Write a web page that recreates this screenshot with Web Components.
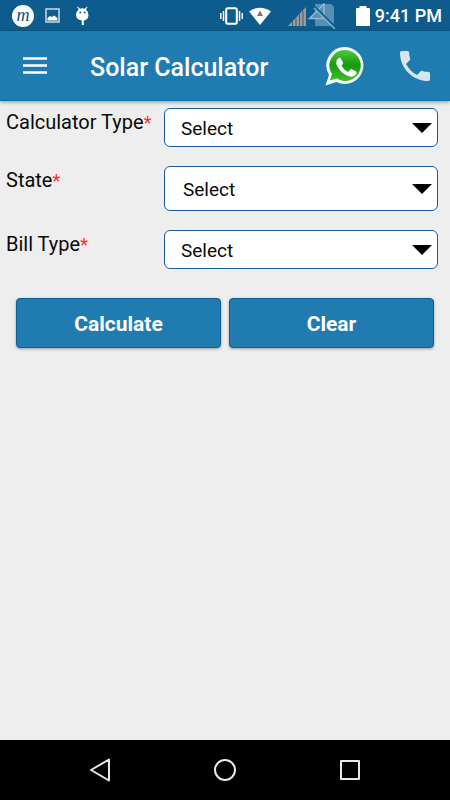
<!DOCTYPE html>
<html lang="en">
<head>
<meta charset="utf-8">
<meta name="viewport" content="width=device-width, initial-scale=1">
<title>Solar Calculator</title>
<style>
  body {
    margin: 0;
    font-family: Roboto, "Noto Sans", sans-serif;
    background: #eeeeee;
  }
</style>
</head>
<body>
<solar-app>
  <status-bar slot="top" time="9:41 PM"></status-bar>
  <app-header slot="top">Solar Calculator</app-header>
  <select-field placeholder="Select">Calculator Type</select-field>
  <select-field placeholder="Select" size="tall">State</select-field>
  <select-field placeholder="Select">Bill Type</select-field>
  <action-button slot="actions">Calculate</action-button>
  <action-button slot="actions">Clear</action-button>
  <nav-bar slot="bottom"></nav-bar>
</solar-app>

<script>
class SolarApp extends HTMLElement {
  constructor() {
    super();
    this.attachShadow({ mode: "open" });
  }

  connectedCallback() {
    this.shadowRoot.innerHTML = /* html */ `
      <style>
        :host {
          display: flex;
          flex-direction: column;
          min-height: 100vh;
        }

        main {
          flex: 1;
        }

        .fields {
          display: grid;
          gap: 19px;
          padding: 7px 12px 0 6px;
        }

        .actions {
          display: grid;
          grid-template-columns: 1fr 1fr;
          gap: 8px;
          padding: 29px 16px 16px;
        }
      </style>

      <slot name="top"></slot>
      <main>
        <div class="fields"><slot></slot></div>
        <div class="actions"><slot name="actions"></slot></div>
      </main>
      <slot name="bottom"></slot>
    `;
  }
}

class StatusBar extends HTMLElement {
  constructor() {
    super();
    this.attachShadow({ mode: "open" });
  }

  connectedCallback() {
    this.shadowRoot.innerHTML = /* html */ `
      <style>
        :host {
          display: flex;
          align-items: center;
          justify-content: space-between;
          height: 31px;
          padding: 0 8px 0 12px;
          color: #fff;
          background: #0d5c8d;
        }

        .group {
          display: flex;
          align-items: center;
        }

        .logo {
          width: 22px;
          height: 22px;
          border-radius: 50%;
          background: #fff;
          color: #0d4f7c;
          font: italic 18px/20px "Liberation Serif", serif;
          text-align: center;
        }

        .left {
          gap: 11px;
        }

        .signal {
          margin-left: 13px;
        }

        .battery {
          margin: 0 5px 0 18px;
        }

        time {
          font-size: 18px;
          font-weight: 500;
          line-height: 32px;
        }

        svg {
          display: block;
        }
      </style>

      <div class="group left">
        <span class="logo">m</span>
        <svg width="15" height="15" viewBox="0 0 15 15">
          <rect x="1" y="1" width="13" height="13" fill="none" stroke="#bed4e3" stroke-width="1.6"/>
          <path d="M2.500 12.500V10l2.500-2 2 1 2-1.500 3.500 2.500v2.500z" fill="#fff"/>
        </svg>
        <svg width="24" height="22" viewBox="0 0 24 22">
          <path d="M6.500 1.500l2.600 2.300Q11.300 2.600 13.600 3.800L16.200 1.500l.4.500-1.600 2.500Q17.800 7 17.500 10.500 16.800 15 12.800 15.500V20h-2v-4.500Q6 15 5 10.500 4.800 7 7.800 4.600L6 2z" fill="#fff"/>
          <circle cx="9.300" cy="7.500" r="1" fill="#0d5c8d"/>
          <circle cx="13.700" cy="7.500" r="1" fill="#0d5c8d"/>
        </svg>
      </div>

      <div class="group">
        <svg width="23" height="18" viewBox="0 0 23 18">
          <rect x="6.200" y="1.200" width="10.600" height="15.600" rx="1.500" fill="none" stroke="#fff" stroke-width="2"/>
          <path d="M3.500 4v10M.8 6v6M19.500 4v10M22.200 6v6" stroke="#fff" stroke-width="1.500"/>
        </svg>
        <svg width="32" height="20" viewBox="0 0 32 20">
          <path d="M6 5.500Q17 -2 28 5.500L17 19z" fill="#fff"/>
          <path d="M17 4.500l3 5.500h-6z" fill="#777"/>
        </svg>
        <svg class="signal" width="50" height="26" viewBox="0 0 50 26">
          <path d="M0 23L18 4v19z" fill="#9b9b9b"/>
          <path d="M4.500 18v5M8 15v8M11.500 11v12M15 8v15" stroke="#4e5d67"/>
          <path d="M27 1h14q5 0 5 5v12q0 5-5 5H27z" fill="#5591b5"/>
          <path d="M21.500 15.500L36 1v14.500z" fill="#5591b5" stroke="#93b8d0" stroke-width="1.500"/>
          <path d="M27 4l21 21" stroke="#0d5c8d" stroke-width="2"/>
          <path d="M26 5l21 21" stroke="#87b0ca" stroke-width="1.500"/>
        </svg>
        <svg class="battery" width="14" height="20" viewBox="0 0 14 20">
          <path d="M3.500 0h7v2H13q1 0 1 1v16q0 1-1 1H1q-1 0-1-1V3q0-1 1-1h2.500z" fill="#fff"/>
        </svg>
        <time>${this.getAttribute("time")}</time>
      </div>
    `;
  }
}

class AppHeader extends HTMLElement {
  constructor() {
    super();
    this.attachShadow({ mode: "open" });
  }

  connectedCallback() {
    this.shadowRoot.innerHTML = /* html */ `
      <style>
        :host {
          display: flex;
          align-items: center;
          height: 70px;
          padding: 0 20px;
          color: #fff;
          background: #207bb0;
          box-shadow: inset 0 -1px #0874ad, 0 1px 4px rgba(0, 0, 0, 0.4);
        }

        button {
          padding: 0;
          border: 0;
          color: inherit;
          background: none;
        }

        h1 {
          flex: 1;
          margin: 4px 0 0 40px;
          font-size: 25px;
          font-weight: 500;
          line-height: 32px;
          white-space: nowrap;
        }

        .links {
          display: flex;
          align-items: center;
          gap: 35px;
        }

        svg {
          display: block;
        }
      </style>

      <button type="button" aria-label="Menu">
        <svg width="30" height="20" viewBox="0 0 30 20">
          <path d="M3 2.500h24M3 9.500h24M3 16.500h24" stroke="#fff" stroke-width="2.600"/>
        </svg>
      </button>
      <h1><slot></slot></h1>
      <div class="links">
        <button type="button" aria-label="WhatsApp">
          <svg width="40" height="40" viewBox="0 0 40 40">
            <defs>
              <linearGradient id="green" x2="0" y2="1">
                <stop offset="0" stop-color="#4cc83b"/>
                <stop offset="0.500" stop-color="#159b0d"/>
                <stop offset="1" stop-color="#42bf30"/>
              </linearGradient>
            </defs>
            <path d="M20 1A18.500 18.500 0 0 0 4 29L.5 39.500 11.500 36A18.500 18.500 0 1 0 20 1z" fill="#f5faf5"/>
            <path d="M20.300 4A15.500 15.500 0 0 0 7 28L5 34.500l6.800-2A15.500 15.500 0 1 0 20.300 4z" fill="url(#green)"/>
            <path d="M13 12.500q1.500-1.500 3 .2l2 3.800q.5 1.300-1.500 3.200 2.500 4.500 6.700 6.200l2.300-2.400q.8-.7 1.800-.1l3.700 2q1.200.8.300 2.500-2.200 3.600-6.600 2.600-9-2.500-13.100-11.500-1.200-3.800 1.400-6.500z" fill="#fff"/>
          </svg>
        </button>
        <button type="button" aria-label="Call">
          <svg width="30" height="30" viewBox="3 3 18 18">
            <path d="M6.620 10.790c1.440 2.830 3.760 5.140 6.590 6.590l2.200-2.200c.27-.27.67-.36 1.020-.24 1.120.37 2.330.57 3.570.57.55 0 1 .45 1 1V20c0 .55-.45 1-1 1-9.390 0-17-7.610-17-17 0-.55.45-1 1-1h3.500c.55 0 1 .45 1 1 0 1.250.2 2.450.57 3.570.11.35.03.74-.25 1.020l-2.200 2.200z" fill="#d5e6ef"/>
          </svg>
        </button>
      </div>
    `;
  }
}

class SelectField extends HTMLElement {
  constructor() {
    super();
    this.attachShadow({ mode: "open" });
  }

  connectedCallback() {
    this.shadowRoot.innerHTML = /* html */ `
      <style>
        :host {
          display: grid;
          grid-template-columns: 158px 1fr;
          --field-height: 39px;
          --field-indent: 16px;
        }

        :host([size="tall"]) {
          --field-height: 45px;
          --field-indent: 18px;
        }

        label {
          font-size: 20px;
          line-height: 28px;
          color: #0a0a0a;
          white-space: nowrap;
        }

        .required {
          font-size: 18px;
          color: #ff2a2a;
        }

        .control {
          display: grid;
          align-items: center;
        }

        select,
        svg {
          grid-area: 1 / 1;
        }

        select {
          appearance: none;
          box-sizing: border-box;
          width: 100%;
          height: var(--field-height);
          margin: 0;
          padding: 1px 32px 0 var(--field-indent);
          border: 1px solid #175f93;
          border-radius: 6px;
          font: 19px Roboto, "Noto Sans", sans-serif;
          color: #0a0a0a;
          background: #fff;
        }

        svg {
          justify-self: end;
          margin-right: 6px;
          pointer-events: none;
        }
      </style>

      <label for="field"><slot></slot><span class="required">*</span></label>
      <div class="control">
        <select id="field"><option>${this.getAttribute("placeholder")}</option></select>
        <svg width="20" height="10" viewBox="0 0 20 10"><path d="M0 0h20L10 10z"/></svg>
      </div>
    `;
  }
}

class ActionButton extends HTMLElement {
  constructor() {
    super();
    this.attachShadow({ mode: "open" });
  }

  connectedCallback() {
    this.shadowRoot.innerHTML = /* html */ `
      <style>
        :host {
          display: block;
        }

        button {
          display: block;
          box-sizing: border-box;
          width: 100%;
          height: 50px;
          padding: 2px 0 0;
          border: 1px solid #0b5f96;
          border-radius: 4px;
          font: bold 21px Roboto, "Noto Sans", sans-serif;
          color: #fff;
          background: #207bb0;
          box-shadow: 0 1px 3px rgba(0, 0, 0, 0.35);
        }
      </style>

      <button type="button"><slot></slot></button>
    `;
  }
}

class NavBar extends HTMLElement {
  constructor() {
    super();
    this.attachShadow({ mode: "open" });
  }

  connectedCallback() {
    this.shadowRoot.innerHTML = /* html */ `
      <style>
        :host {
          display: block;
          background: #000;
        }

        nav {
          display: flex;
          align-items: center;
          justify-content: space-between;
          height: 60px;
          padding: 0 88px;
        }

        button {
          padding: 0;
          border: 0;
          background: none;
        }

        svg {
          display: block;
          fill: none;
          stroke: #e8e8e8;
          stroke-width: 2;
          stroke-linejoin: round;
        }
      </style>

      <nav>
        <button type="button" aria-label="Back">
          <svg width="24" height="24" viewBox="0 0 24 24"><path d="M21 1.500v21L3 12z"/></svg>
        </button>
        <button type="button" aria-label="Home">
          <svg width="24" height="24" viewBox="0 0 24 24"><circle cx="12" cy="12" r="10"/></svg>
        </button>
        <button type="button" aria-label="Recent apps">
          <svg width="24" height="24" viewBox="0 0 24 24"><rect x="3" y="3" width="18" height="18"/></svg>
        </button>
      </nav>
    `;
  }
}

customElements.define("solar-app", SolarApp);
customElements.define("status-bar", StatusBar);
customElements.define("app-header", AppHeader);
customElements.define("select-field", SelectField);
customElements.define("action-button", ActionButton);
customElements.define("nav-bar", NavBar);
</script>
</body>
</html>
